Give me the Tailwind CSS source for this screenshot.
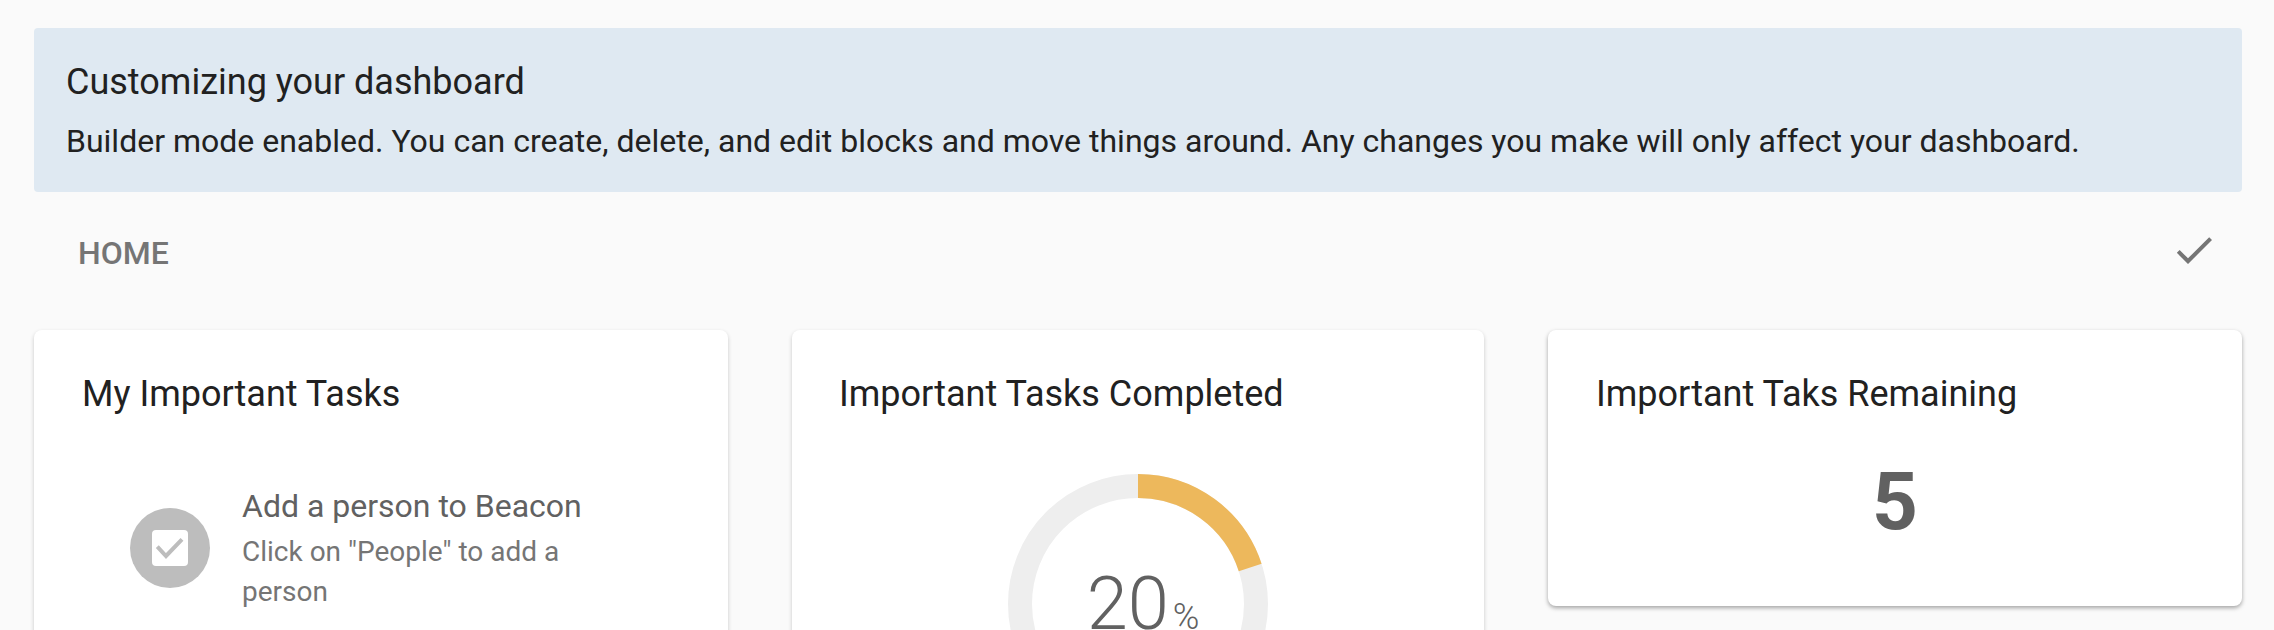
<!DOCTYPE html>
<html lang="en">
<head>
    <meta charset="UTF-8">
    <title>Dashboard</title>
    <script src="https://cdn.jsdelivr.net/npm/@tailwindcss/browser@4"></script>
</head>
<body class="h-[630px] overflow-hidden bg-[#fafafa] font-['Roboto',sans-serif] text-[#212121]">
    <div class="pl-[34px] pr-[32px] pt-[28px]">

        <!-- Banner -->
        <div class="h-[164px] rounded-[4px] bg-[#dfe9f2] pl-[32px] pt-[32px]">
            <h2 class="text-[36px] leading-[44px]">Customizing your dashboard</h2>
            <p class="mt-[17px] text-[32px] leading-[40px]">Builder mode enabled. You can create, delete, and edit blocks and move things around. Any changes you make will only affect your dashboard.</p>
        </div>

        <!-- Page title row -->
        <div class="flex h-[138px] items-center justify-between pb-[16px] pl-[44px] pr-[24px]">
            <span class="text-[32px] font-medium uppercase text-[#757575]">Home</span>
            <svg class="mb-[6px] h-[48px] w-[48px] fill-[#757575]" viewBox="0 0 24 24"><path d="M9 16.17L4.83 12l-1.42 1.41L9 19 21 7l-1.41-1.41z"/></svg>
        </div>

        <!-- Cards -->
        <div class="grid grid-cols-[694px_692px_694px] items-start gap-[64px]">
            <div class="h-[420px] rounded-[8px] bg-white px-[48px] pt-[42px] shadow-[0_2px_4px_rgba(0,0,0,0.2)]">
                <h3 class="text-[36px] leading-[44px]">My Important Tasks</h3>
                <div class="mt-[68px] flex items-center pl-[48px]">
                    <div class="flex h-[80px] w-[80px] shrink-0 items-center justify-center rounded-full bg-[#bdbdbd]">
                        <svg class="h-[36px] w-[36px]" viewBox="0 0 36 36">
                            <rect width="36" height="36" rx="4" fill="#fff"/>
                            <polyline points="5.3,16.7 14,26 30,9.3" fill="none" stroke="#bdbdbd" stroke-width="4"/>
                        </svg>
                    </div>
                    <div class="ml-[32px] w-[340px]">
                        <div class="text-[32px] leading-[44px] text-[#616161]">Add a person to Beacon</div>
                        <div class="mt-[4px] text-[28px] leading-[40px] text-[#757575]">Click on "People" to add a person</div>
                    </div>
                </div>
            </div>

            <div class="h-[420px] rounded-[8px] bg-white pl-[47px] pr-[48px] pt-[42px] shadow-[0_2px_4px_rgba(0,0,0,0.2)]">
                <h3 class="text-[36px] leading-[44px]">Important Tasks Completed</h3>
                <div class="relative ml-[169px] mt-[58px] h-[260px] w-[260px]">
                    <svg class="h-[260px] w-[260px]" viewBox="0 0 260 260">
                        <circle cx="130" cy="130" r="118" fill="none" stroke="#eeeeee" stroke-width="24"/>
                        <path d="M130 12 A118 118 0 0 1 242.2 93.5" fill="none" stroke="#edb85c" stroke-width="24"/>
                    </svg>
                    <div class="absolute left-0 right-0 top-[88px] flex items-baseline justify-center pl-[10px] font-light text-[#616161]">
                        <span class="text-[74px] leading-[84px]">20</span><span class="ml-[4px] text-[36px]">%</span>
                    </div>
                </div>
            </div>

            <div class="h-[276px] rounded-[8px] bg-white px-[48px] pt-[42px] shadow-[0_2px_4px_rgba(0,0,0,0.35)]">
                <h3 class="text-[36px] leading-[44px]">Important Taks Remaining</h3>
                <div class="mt-[39px] text-center text-[80px] font-bold leading-[94px] text-[#616161]">5</div>
            </div>
        </div>
    </div>
</body>
</html>
